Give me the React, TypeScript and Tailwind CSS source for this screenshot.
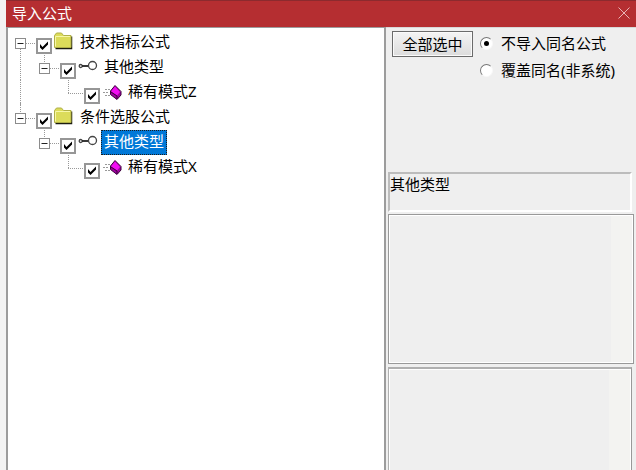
import React, { useState } from 'react';

type NodeIcon = 'folder' | 'link' | 'formula';

interface TreeNode {
  id: string;
  label: string;
  icon: NodeIcon;
  children?: TreeNode[];
}

const formulaTree: TreeNode[] = [
  {
    id: 'indicator',
    label: '技术指标公式',
    icon: 'folder',
    children: [
      {
        id: 'indicator-other',
        label: '其他类型',
        icon: 'link',
        children: [{ id: 'indicator-z', label: '稀有模式Z', icon: 'formula' }],
      },
    ],
  },
  {
    id: 'screener',
    label: '条件选股公式',
    icon: 'folder',
    children: [
      {
        id: 'screener-other',
        label: '其他类型',
        icon: 'link',
        children: [{ id: 'screener-x', label: '稀有模式X', icon: 'formula' }],
      },
    ],
  },
];

const importModes = [
  { value: 'skip', label: '不导入同名公式' },
  { value: 'overwrite', label: '覆盖同名(非系统)' },
];

const allIds = (nodes: TreeNode[]): string[] =>
  nodes.flatMap((node) => [node.id, ...allIds(node.children ?? [])]);

const Icon: React.FC<{ name: NodeIcon }> = ({ name }) => (
  <svg width="25" height="25" viewBox="0 0 25 25" className="shrink-0" aria-hidden="true">
    {name === 'folder' && (
      <>
        <path d="M3.5 18.5h16v-12" fill="none" stroke="#1c1c10" strokeWidth="1.5" />
        <path d="M2.5 17.5v-12l2-2.500h5l2 2.500h7.500v12z" fill="#dcdc5a" stroke="#b0b048" />
        <path d="M3.5 16.5v-10h14.5" fill="none" stroke="#f7f7a8" />
      </>
    )}
    {name === 'link' && (
      <g fill="none" stroke="#444" strokeWidth="1.3">
        <circle cx="4.7" cy="11" r="1.5" />
        <path d="M6 11h6.5" stroke="#222" strokeWidth="1.8" />
        <circle cx="16.5" cy="10.5" r="4" />
      </g>
    )}
    {name === 'formula' && (
      <>
        <path d="M5 9.5h5M3 12.5h6M5 15.5h5" stroke="#999" strokeDasharray="2 1" />
        <path d="M15 5.5l6 6v3.500L17 19.5l-6.500-5V11z" fill="#a000a0" stroke="#3c003c" />
        <path d="M15 6.500l5 5.500-3 3.500-6-4z" fill="#f20cf2" />
        <path d="M11 12l6 4v3" fill="none" stroke="#3c003c" />
      </>
    )}
  </svg>
);

interface BranchProps {
  level: number;
  open?: boolean;
  hasNext: boolean;
  onToggle?: () => void;
}

// Dotted connector in front of a node, with the +/- box when it has children
const Branch: React.FC<BranchProps> = ({ level, open, hasNext, onToggle }) => {
  const lines = (
    <svg width="28" height="25" viewBox="0 0 28 25" className="block overflow-visible" aria-hidden="true">
      <g fill="none" stroke="#999" strokeDasharray="1 1">
        {(level > 0 || !hasNext) && <path d="M12.5 -2V13" />}
        {hasNext && <path d="M12.5 13V25" />}
        <path d="M12 13.5H28" />
      </g>
      {onToggle && (
        <>
          <rect x="7.5" y="8.5" width="10" height="10" fill="#fff" stroke="#8c8c8c" />
          <path d={open ? 'M9.5 13.5h6' : 'M9.5 13.5h6M12.5 10.5v6'} stroke="#222" />
        </>
      )}
    </svg>
  );
  return onToggle ? (
    <button type="button" className="shrink-0" aria-label={open ? 'collapse' : 'expand'} onClick={onToggle}>
      {lines}
    </button>
  ) : (
    <span className="shrink-0">{lines}</span>
  );
};

export default function App() {
  const [checked, setChecked] = useState<string[]>(allIds(formulaTree));
  const [collapsed, setCollapsed] = useState<string[]>([]);
  const [selected, setSelected] = useState({ id: 'screener-other', label: '其他类型' });
  const [mode, setMode] = useState('skip');

  const flip = (list: string[], id: string) =>
    list.includes(id) ? list.filter((item) => item !== id) : [...list, id];

  const renderNodes = (nodes: TreeNode[], level: number, guides: boolean[]): React.ReactNode =>
    nodes.map((node, index) => {
      const open = !collapsed.includes(node.id);
      const hasNext = index < nodes.length - 1;
      return (
        <li key={node.id}>
          <div className="flex h-[25px]">
            {guides.map((show, i) => (
              <svg key={i} width="24" height="25" className="shrink-0" aria-hidden="true">
                {show && <path d="M12.5 0V25" stroke="#999" strokeDasharray="1 1" />}
              </svg>
            ))}
            <Branch
              level={level}
              open={open}
              hasNext={hasNext}
              onToggle={node.children ? () => setCollapsed(flip(collapsed, node.id)) : undefined}
            />
            <span className="grid h-6 w-4 shrink-0 items-end">
              <input
                id={node.id}
                type="checkbox"
                aria-labelledby={`${node.id}-label`}
                checked={checked.includes(node.id)}
                onChange={() => setChecked(flip(checked, node.id))}
                className="peer col-start-1 row-start-1 size-4 appearance-none border-2 border-[#969696] bg-white"
              />
              <svg
                viewBox="0 0 16 16"
                className="pointer-events-none invisible col-start-1 row-start-1 size-4 peer-checked:visible"
                aria-hidden="true"
              >
                <path d="M4 6v3.5l2.5 2.5L12 6.5V3.5L6.5 9z" fill="#000" />
              </svg>
            </span>
            <Icon name={node.icon} />
            <label
              id={`${node.id}-label`}
              onClick={() => setSelected({ id: node.id, label: node.label })}
              className={
                selected.id === node.id
                  ? 'border border-dotted border-[#1b1b1b] bg-[#0078d7] px-[2px] leading-[21px] whitespace-nowrap text-white'
                  : 'px-[3px] leading-[23px] whitespace-nowrap'
              }
            >
              {node.label}
            </label>
          </div>
          {node.children && open && (
            <ul>{renderNodes(node.children, level + 1, [...guides, hasNext])}</ul>
          )}
        </li>
      );
    });

  return (
    <div className="flex h-screen flex-col bg-[#f3f3f3] pl-[6px] font-['Noto_Sans','Noto_Sans_CJK_SC',sans-serif] text-[15px] text-black">
      <header className="flex h-[27px] shrink-0 items-center justify-between border-t border-[#8c2a2e] bg-[#b52e31] pr-[5px] pb-[2px] pl-[6px] text-white">
        <h1 className="leading-6">导入公式</h1>
        <button type="button" aria-label="关闭">
          <svg width="14" height="14" viewBox="0 0 14 14" className="block" aria-hidden="true">
            <path d="M1.5 1.5l11 11M12.5 1.5l-11 11" stroke="#e9b4b5" />
          </svg>
        </button>
      </header>

      <div className="flex min-h-0 flex-1">
        <main className="min-w-0 flex-1 overflow-hidden border-t border-r-2 border-l-2 border-[#9c9c9c] bg-white pt-[2px]">
          <ul>{renderNodes(formulaTree, 0, [])}</ul>
        </main>

        <aside className="flex w-[250px] shrink-0 flex-col border-t border-t-[#d8d8d8] bg-[#efefef] pl-[2px]">
          <div className="flex h-[144px] shrink-0 items-start gap-[7px] pt-[2px] pl-1">
            <button
              type="button"
              onClick={() => setChecked(allIds(formulaTree))}
              className="mt-px h-[26px] w-[81px] shrink-0 border border-[#6b6b6b] bg-linear-to-b from-[#f4f4f4] to-[#dcdcdc] leading-6 inset-ring inset-ring-[#fafafa]"
            >
              全部选中
            </button>
            <fieldset className="flex flex-col">
              {importModes.map((item) => (
                <label key={item.value} className="flex h-[27px] items-center gap-2 whitespace-nowrap">
                  <span className="grid shrink-0 place-items-center">
                    <input
                      type="radio"
                      name="mode"
                      value={item.value}
                      checked={mode === item.value}
                      onChange={() => setMode(item.value)}
                      className="peer col-start-1 row-start-1 size-[13px] appearance-none rounded-full border border-t-[#777] border-r-[#f8f8f8] border-b-[#f8f8f8] border-l-[#777] bg-white"
                    />
                    <span className="invisible col-start-1 row-start-1 size-[5px] rounded-full bg-black peer-checked:visible" />
                  </span>
                  {item.label}
                </label>
              ))}
            </fieldset>
          </div>

          <p className="mr-1 h-10 shrink-0 border-2 border-t-[#bcbcbc] border-r-white border-b-white border-l-[#bcbcbc] leading-5">
            {selected.label}
          </p>

          <div className="mt-[2px] mr-[2px] flex h-[150px] shrink-0 justify-end border border-[#999] inset-ring inset-ring-white">
            <div className="my-px mr-px w-[21px] bg-[#f3f3f1]" />
          </div>

          <div className="mt-[3px] mr-1 flex min-h-0 flex-1 justify-end border-x border-t-2 border-t-[#b0b0b0] border-r-[#999] border-l-[#b0b0b0]">
            <div className="flex flex-1 justify-end border-x border-t border-white">
              <div className="w-[21px] bg-[#f3f3f1]" />
            </div>
          </div>
        </aside>
      </div>
    </div>
  );
}
